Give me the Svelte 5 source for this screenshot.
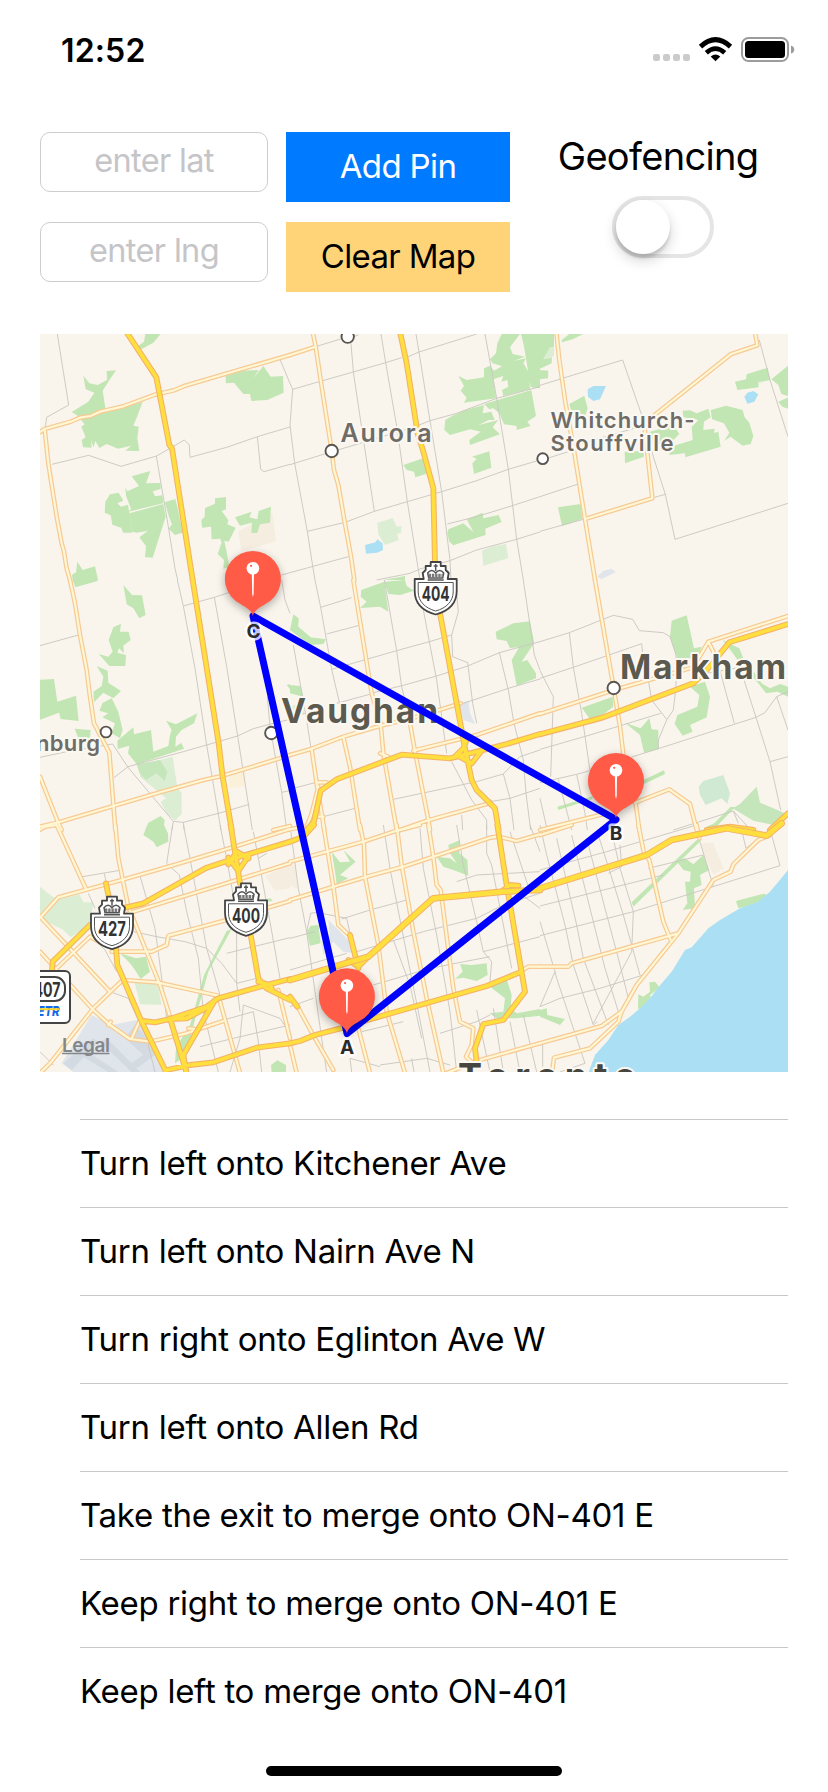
<script>
  // Each sheet is one part of the map, drawn on a grid three times finer than the page.
  const sheets = [
    {
      x: 40, y: 330,
      park: 'M228 121L200 123L201 150L173 165L148 160L130 137L137 178L163 188L145 215L95 246L120 262L197 240L188 182L205 155ZM116 262L197 244L308 216L292 258L280 287L296 290L292 325L298 363L256 362L273 347L234 356L200 342L178 354L166 333L160 352L153 330L155 353L129 352L125 330L137 322L124 290L134 283ZM316 12L362 12L340 38L300 60L294 48L312 35ZM556 135L600 122L656 120L640 145L670 108L692 140L729 138L731 188L682 210L634 213L630 192L610 192L582 158L558 160ZM275 439L331 423L318 460L362 459L362 477L338 484L345 499L367 496L370 520L266 545L273 537L258 497L256 472L262 484L297 468ZM236 488L250 512L232 520L243 530L264 524L277 608L250 608L243 593L217 584L212 556L194 548L196 515L210 493ZM268 550L370 522L377 560L338 683L315 681L318 648L298 622L324 602L290 608L277 605ZM374 517L406 507L413 535L428 608L405 615L386 596L396 583L388 563ZM558 501L525 505L525 521L495 534L494 560L484 570L486 593L513 590L515 628L540 626L545 637L533 672L552 690L550 717L568 710L560 665L553 632L566 635L587 593L562 583L565 570L545 543L558 538ZM585 562L635 545L628 562L652 568L656 543L693 530L690 578L660 583L652 609L634 609L636 578L600 587ZM112 695L128 720L165 709L174 750L98 750L96 734L108 727Z',
      built: 'M595 604L697 550L708 634L604 664Z',
      street: 'M52 12L86 225L20 262L15 300M36 403L146 376L243 409L350 378L433 330L448 345L450 382L560 352L652 320L750 291M349 378L385 590L405 715L413 750M652 320L662 418L672 425L750 403M720 88L750 160M725 735L750 728',
      road: 'M-10 312L14 297L92 275L120 263L152 258L180 245L250 229L345 194L402 181L435 167L750 75M14 297L25 400L50 560L65 640L72 665L80 715L90 750',
      highway: 'M250 -8L349 142L388 345L396 355L458 750'
    },
    {
      x: 290, y: 330,
      park: 'M340 405L395 386L415 383L408 432L376 442L372 425L350 420ZM635 12L690 12L660 52L668 72L705 80L660 97L640 110L608 100L600 88L618 70L622 40ZM693 12L750 12L750 175L722 172L708 85L700 40ZM505 137L530 150L582 142L582 115L600 107L612 122L660 95L708 85L700 100L718 130L720 178L640 198L636 180L655 170L652 150L634 155L640 138L610 148L618 205L522 218L530 203L512 182L522 168ZM527 240L582 225L578 250L604 245L614 270L596 270L566 285L625 270L608 292L630 313L540 345L538 330L572 305L540 298L480 315L463 300L466 270L487 257ZM582 222L630 208L724 180L738 258L712 275L722 288L680 300L680 288L642 283L628 250L610 235L598 238ZM546 380L598 364L604 413L552 432L547 400L560 386ZM475 598L520 580L550 606L530 568L578 548L580 565L626 555L635 576L586 596L587 615L490 646L478 635L472 610ZM280 750L345 738L345 750Z',
      meadow: 'M262 578L290 570L308 564L320 590L334 588L334 608L322 612L326 630L285 645L265 612ZM576 662L604 650L648 642L655 684L580 708Z',
      water: 'M225 645L256 637L262 628L278 640L279 660L262 668L228 671Z',
      street: 'M0 160L8 178L77 158L190 126L287 98L335 83M77 50L152 27M190 20L205 15M350 82L387 66L560 12M8 178L0 285L14 400L52 604L68 708L75 750M0 404L110 370L370 292L420 272L500 250L620 205L750 170M183 40L190 126L222 340L253 544M273 12L287 98L322 300L352 515L390 750M378 12L387 66L420 272L455 485L480 690L483 750M585 12L620 205L655 418L680 628L700 750M52 604L165 577L253 544L352 515L455 485L560 452L655 418L750 390M472 582L560 560L667 527L750 500M0 728L175 680M260 750L360 730L390 717L480 692L560 660L680 628L750 606',
      road: 'M66 -4L77 50L92 150L125 362L132 420L145 465L163 570L183 680L193 750M0 75L77 50',
      highway: 'M328 -4L350 100L383 310L400 365L430 475L436 750'
    },
    {
      x: 540, y: 330,
      park: 'M0 12L42 12L42 50L30 52L10 88L36 82L35 100L0 116ZM0 120L25 122L24 145L0 148ZM65 30L88 12L130 12L98 28L66 37ZM88 222L133 197L143 235L135 260L100 265ZM585 155L618 148L620 133L683 113L690 150L655 155L656 172L592 180ZM694 148L750 102L750 200L724 192L715 165ZM715 215L750 200L750 238L727 230ZM428 242L450 241L470 250L505 236L512 262L492 275L490 300L524 296L522 308L535 305L542 350L436 382L435 370L388 375L392 350L458 330L455 290L475 270L430 262ZM512 240L558 227L608 240L614 262L628 278L640 318L632 342L608 347L572 320L553 332L568 308L552 280L516 268ZM330 305L400 285L418 312L400 330L350 345L335 330ZM254 366L310 362L312 380L255 400ZM54 532L122 522L127 567L66 588Z',
      meadow: 'M30 52L42 30L42 78L10 88ZM655 155L683 130L690 150L656 160ZM535 265L565 265L572 275L550 280Z',
      water: 'M143 178L160 168L198 168L180 208L160 213L144 200ZM613 200L622 188L640 183L655 193L643 215L622 221Z',
      field: 'M172 740L190 722L215 716L227 726L185 748Z',
      street: 'M0 166L100 135L248 90L305 255L340 380L376 493L405 628L744 520M0 392L85 365M110 345L300 290M0 500L115 462M0 604L130 568M340 503L376 493M658 30L690 150L744 320',
      road: 'M48 -4L58 90L75 210L105 380L135 567L165 750M135 567L337 505L313 285L340 258L572 73L652 46L643 -4'
    },
    {
      x: 40, y: 580,
      park: 'M98 0L175 0L170 4L106 22ZM250 15L276 45L306 46L317 105L298 115L280 85L260 73ZM243 131L240 155L266 155L272 180L250 197L252 220L237 205L232 218L258 225L256 258L208 258L176 222L205 230L218 215L206 180L220 142ZM170 258L203 272L205 308L243 333L220 355L190 338L162 367L160 335L185 318L190 290ZM188 368L215 355L235 395L248 450L240 475L215 460L225 430L187 412L205 400L178 392ZM0 299L42 297L52 365L108 347L116 423L62 417L57 398L0 419ZM104 446L152 450L150 473L116 478ZM232 482L280 442L282 463L333 450L340 515L385 498L390 465L395 450L378 422L408 433L472 400L462 430L425 450L408 470L406 500L424 488L432 506L290 553L264 520L268 497L233 507ZM316 750L325 728L362 708L374 720L370 750ZM740 315L750 312L750 328Z',
      meadow: 'M298 555L398 530L412 622L425 640L425 702L405 722L380 700L362 665L378 655L300 590Z',
      grove: 'M290 553L360 540L382 575L374 603L350 580L318 600L298 578Z',
      sand: 'M565 590L618 575L614 618L570 625Z',
      street: 'M0 197L115 165M412 0L430 78L465 265L500 495L543 750M430 78L523 52L566 38M523 52L560 260L593 468L625 672L637 750M725 0L735 60L750 100M0 532L80 515L218 492L264 562L400 724L430 727L543 698L628 673M222 593L264 560L430 515L500 495L593 468L640 446L700 430L750 418M682 350L690 440L725 637L750 632M725 637L740 750M400 724L396 750M430 727L433 750',
      road: 'M90 0L105 70L120 165L140 270L150 350L162 430L208 518L226 750M0 740L52 728L220 678L350 640L490 600L545 588L720 535L750 525M0 590L52 722L65 750M700 750L750 738',
      highway: 'M458 0L490 200L536 490L548 590L575 750'
    },
    {
      x: 290, y: 580,
      park: 'M214 30L283 5L295 95L270 80L210 84L230 65L212 50ZM283 5L345 0L350 18L372 32L330 45L295 42ZM10 103L26 115L25 140L62 172L108 178L100 192L60 195L0 150ZM617 155L670 130L720 124L733 190L715 215L695 245L712 240L738 280L738 295L680 317L665 240L688 200L660 205L650 183L620 178ZM0 315L32 318L40 350L0 340Z',
      meadow: 'M0 380L40 365L42 400L0 405Z',
      field: 'M505 368L535 363L540 400L555 432L520 420Z',
      street: 'M75 0L92 82L125 268L150 375M92 82L185 53M110 162L208 136M125 268L320 212L418 185L485 165L505 95L500 40M283 0L320 212L335 320L350 380M400 90L418 185L440 300L470 520M485 165L488 230L533 248L548 370L560 430M250 338L340 316L440 288L533 258L628 218L750 185M700 0L733 225L750 270M628 218L655 330L672 430L700 540L708 640L722 750M520 370L655 325L750 297M10 195L50 420L63 505M140 370L250 340M0 413L45 400M10 625L75 608M100 710L195 685M310 658L560 605L640 582L690 530L750 510M485 545L545 660L590 720L590 750M640 582L660 655L672 750M600 665L660 655L750 625M515 705L518 750',
      road: 'M190 0L245 340L272 432L280 520L320 750M0 525L60 508L160 470L270 438L390 408L512 370M65 508L80 610L98 720L103 750M160 472L180 560L210 750M360 430L375 515L415 720L420 750M370 512L560 465L750 400M270 520L295 530M330 750L410 722L590 672L600 665M85 620L65 700L50 740M78 607L110 607M85 710L100 710M0 748L40 740',
      highway: 'M450 100L500 370L522 490L545 600L560 630L615 685L626 750M50 750L72 725L92 632L140 598L335 524L480 535L560 515L650 492L750 462M495 530L520 505L528 485M505 528L545 550L575 512'
    },
    {
      x: 540, y: 580,
      park: 'M395 122L440 106L462 205L485 200L475 235L412 235L390 170ZM450 320L495 305L510 350L500 412L450 435L458 455L428 467L404 432L412 405L472 380L478 345ZM125 383L218 350L220 380L180 410L148 415ZM255 428L302 445L328 415L335 448L355 450L355 508L312 518L300 465ZM548 180L598 205L612 240L645 280L665 310L690 325L720 312L744 320L744 350L712 335L678 340L655 310L600 250L575 215ZM52 680L160 648L155 658L55 690ZM310 600L372 571L375 582L312 612ZM502 750L572 680L585 682L520 750Z',
      grove: 'M578 685L600 672L650 620L660 668L735 700L735 715L700 735L640 722Z',
      marsh: 'M476 620L490 603L550 585L570 640L562 672L545 655L497 675L480 645Z',
      street: 'M0 185L88 158L220 106L278 118L298 152L370 158L390 170L408 225L408 320L400 390L380 420L355 480L355 505M88 158L100 262L125 400L150 572M0 295L100 262L305 191L310 240M0 272L40 350L32 590M0 508L150 465L362 400M325 300L335 360L380 418M0 608L110 583L150 572M272 532L358 505L648 412L675 398L710 350L744 335M540 272L583 430M600 262L648 412L690 545L722 690M500 280L600 262M690 545L744 530M710 350L744 450M55 598L82 700L95 750M110 583L135 700L142 750M0 655L22 750M400 750L580 693L632 750M580 693L595 730',
      road: 'M165 0L222 330L240 440L252 540M0 402L222 330L460 262L505 185L744 108M505 185L520 215M0 750L200 700M285 668L388 628L450 672L470 750M287 670L298 750',
      highway: 'M0 463L190 412L460 310L500 270L568 187L744 132M500 750L570 740L640 750M690 750L744 700'
    },
    {
      x: 40, y: 825,
      field: 'M155 570L215 600L290 585L300 600L375 741L100 741L65 715Z',
      park: 'M322 0L372 0L384 25L385 50L350 67L340 50L310 30ZM240 385L288 400L318 395L330 440L302 462L285 435L270 415ZM575 312L505 440L462 595L460 605L440 690L405 715L408 670L425 640L450 600L492 450L560 318ZM693 720L712 706L738 720L738 744L695 744ZM660 225L692 220L698 228L664 232Z',
      meadow: 'M0 185L38 215L62 222L118 208L130 232L160 232L150 300L92 337L70 315L0 280ZM283 470L352 470L365 540L300 538Z',
      built: 'M675 152L750 120L750 190L705 198Z',
      runway: 'M105 680L120 665L235 741L205 741ZM180 650L200 640L300 741L275 741ZM70 715L160 640L175 650L95 735ZM255 640L285 600L305 620L345 690L290 730L270 718L310 690Z',
      street: 'M398 0L380 115L418 150L440 260L475 400L490 560L535 741M430 0L450 100L500 370L540 510M128 155L240 136M193 145L205 205M145 205L165 250M300 152L345 310L360 420L380 580M280 320L350 335L435 350L500 370L545 415L590 475M540 0L560 100L590 270L590 475L600 560M640 20L655 100L690 290L720 460M655 100L680 85M560 385L750 338M590 475L650 460M480 665L580 640L750 600M550 585L640 560L655 650L665 741M610 540L720 580L740 610M610 540L600 640L570 741M210 500L265 520L320 640L345 741M155 335L195 375L230 440M0 680L40 720',
      road: 'M0 14L15 5L50 0L138 192M226 0L235 100L265 245L360 480L390 575M0 278L55 217L245 165L410 118L600 60L750 12M265 265L590 165L750 115M215 380L335 380L380 360L385 332L560 285L750 228M250 465L350 472L535 512L600 744M0 275L210 500M0 380L160 555L210 600L270 642L330 650L440 625L550 588M0 744L30 715L160 550L245 468M150 335L50 430M150 335L185 355M275 640L300 585M445 610L465 612M715 495L745 620L750 640M205 600L212 590',
      highway: 'M572 0L600 175M632 330L655 460L680 490L750 525M255 248L310 235L500 128L600 95L750 50M198 175L208 225M150 300L38 410L35 450M228 370L232 420L305 590L380 744M310 588L345 592L390 582L500 545L535 520L660 485L750 462M390 580L440 744M390 582L440 580L500 548M440 744L430 690L525 525M380 735L450 720L520 712L650 668L750 655M565 98L595 138L626 92M565 118L590 80L626 100M655 470L690 480L700 500'
    },
    {
      x: 290, y: 825,
      field: 'M115 285L140 310L180 350L195 385L160 380L130 350L100 390L95 350L120 345Z',
      park: 'M125 80L150 112L180 110L160 75L197 110L150 150L175 160L140 178L135 140ZM440 95L480 100L500 115L478 82L475 60L510 45L508 85L532 105L535 152L490 135L460 125ZM50 320L62 302L85 300L92 355L60 362ZM510 417L545 420L590 415L593 450L560 468L520 458L495 462L518 440ZM600 485L650 462L665 510L662 550L680 565L750 552L750 572L680 580L620 580L598 565L640 560L645 520Z',
      built: 'M0 120L15 120L25 195L0 180Z',
      street: 'M0 340L75 320M110 741L95 640L75 500L50 320L62 265L80 262L170 280L190 370L230 570M0 0L25 190L50 320M155 282L240 255L350 225M0 435L170 385M200 380L400 320L560 280L640 240L750 205M280 0L300 130L345 360L385 560L420 741M310 345L360 480L395 640M390 10L400 130L440 330L480 560L500 741M500 0L520 120L560 290L580 380L605 410L600 470M590 0L590 85L605 120L640 300L665 430M500 170L560 150L750 140M580 380L750 335M0 545L70 520M250 480L420 430L600 395M450 625L560 590L600 570M270 720L410 700L480 720M560 555L600 741M610 550L640 741M660 590L690 741M700 570L740 741M720 0L750 80M660 20L720 200M180 700L270 725M180 700L185 741M365 700L372 741M215 620L340 590M690 205L750 250',
      road: 'M100 0L130 185L145 300L182 335M210 0L222 60L225 155L265 360L290 560L345 744M320 0L335 120L370 320L410 520L460 744M415 0L430 95L440 180L452 195L490 490L510 590L550 610L545 660L528 695L545 711M0 110L110 80L220 50L310 20L390 0M0 225L130 185L230 155L340 125L430 95L600 38L625 35L680 48L750 28M20 540L75 640L130 735M0 660L20 744M205 610L240 744M470 744L570 705L750 655M690 440L715 425L750 425',
      highway: 'M0 50L40 35L72 0M180 330L205 430M622 0L650 180L705 500L640 585L580 597L555 670L560 710M0 655L30 648L75 630L160 608L250 580L590 483L695 440M0 515L22 545M175 405L205 425L235 395M640 195L660 180L685 182',
      motorway: 'M0 465L200 405L235 395L430 220L640 200L750 195'
    },
    {
      x: 540, y: 825,
      water: 'M750 128L715 170L690 200L655 230L600 250L540 285L505 310L455 367L435 375L395 440L365 475L330 520L300 550L270 575L235 600L205 645L165 690L145 744L750 744Z',
      park: 'M588 228L670 206L680 208L655 235L595 250ZM275 232L470 45L485 45L280 245ZM500 5L530 -8L535 0L512 15ZM410 108L435 100L460 118L490 90L508 135L480 150L485 180L462 190L465 250L428 255L442 235L435 170L450 170L452 140L430 135ZM295 508L310 515L330 500L328 472L345 470L360 488L330 510L340 540L294 552ZM0 555L20 550L22 570L75 582L60 600L0 575Z',
      built: 'M485 55L520 52L530 80L552 130L520 150L490 85Z',
      street: 'M0 0L20 90L75 300L100 420L160 600L172 590M50 40L110 300L130 400L205 600M95 30L160 290L195 430L235 560M140 40L195 250L235 400L265 520M175 30L250 270L300 450M215 20L240 130L280 260L275 380L160 595M0 135L200 80L470 0M0 243L210 190L370 150M0 332L280 260L720 122L695 30M0 545L60 520L180 490L310 450M0 290L45 440L50 460L110 640L135 715M45 440L0 545M205 145L245 125L240 60M325 130L490 90M480 50L520 185M608 28L618 70L650 45M8 655L8 725M60 741L135 715',
      road: 'M0 30L95 0M295 0L312 85L328 105L370 290L392 345M470 0L478 40M0 425L85 425L95 415L415 325M690 30L655 45L580 118L572 140L520 165L415 325L290 480L245 560L185 603L0 655M245 560L235 590L150 670L42 698L36 744',
      motorway: 'M0 190L320 90L395 45L560 10L680 32L725 -5'
    }
  ];

  const ground = ['field', 'runway', 'built', 'sand', 'meadow', 'grove', 'marsh', 'park', 'water', 'street'];
  const towns = [[347.7, 336.7, 6.2], [331.7, 451, 6.2], [542.7, 458.7, 5.4], [106, 732, 5.4], [271.3, 733, 6.2], [613.7, 688, 6.2]];
  const shields = [
    { x: 435.7, y: 561, n: '404' },
    { x: 246, y: 882.3, n: '400' },
    { x: 112, y: 895.7, n: '427' }
  ];
  const pins = [
    { x: 252.9, y: 579, n: 'C', tx: 253.5, ty: 638 },
    { x: 616, y: 781, n: 'B', tx: 616, ty: 840 },
    { x: 346.9, y: 996.3, n: 'A', tx: 347, ty: 1054.3 }
  ];
  const steps = [
    'Turn left onto Kitchener Ave',
    'Turn left onto Nairn Ave N',
    'Turn right onto Eglinton Ave W',
    'Turn left onto Allen Rd',
    'Take the exit to merge onto ON-401 E',
    'Keep right to merge onto ON-401 E',
    'Keep left to merge onto ON-401'
  ];
  let geofencing = $state(false);
</script>

<div class="screen">
  <header class="status">
    <span class="time">12:52</span>
    <svg class="indicators" width="144" height="28" viewBox="652 35 144 28">
      <g fill="#cbcbcb">
        {#each [653, 663, 673, 683] as x}
          <rect {x} y="54" width="7" height="7" rx="2.2" />
        {/each}
      </g>
      <g fill="none" stroke="#000">
        <path d="M700.5 46.6Q715.5 32.8 730.5 46.6" stroke-width="5" />
        <path d="M706.3 52.8Q715.5 44.6 724.7 52.8" stroke-width="4.6" />
      </g>
      <path d="M715.5 61.3L710.7 56.4Q715.5 52.6 720.3 56.4Z" />
      <rect x="742" y="38" width="46" height="23" rx="6.5" fill="none" stroke="#9c9c9c" stroke-width="2" />
      <rect x="745" y="41" width="40" height="17" rx="3.5" />
      <path d="M791 45.5Q794.3 46.5 794.3 49.5Q794.3 52.5 791 53.5Z" fill="#9c9c9c" />
    </svg>
  </header>

  <section class="controls">
    <div class="col fields">
      <input type="text" placeholder="enter lat" />
      <input type="text" placeholder="enter lng" />
    </div>
    <div class="col">
      <button class="add">Add Pin</button>
      <button class="clear">Clear Map</button>
    </div>
    <div class="fence">
      <span class="fence-label">Geofencing</span>
      <button class="switch" class:on={geofencing} aria-label="Geofencing" onclick={() => (geofencing = !geofencing)}>
        <span class="knob"></span>
      </button>
    </div>
  </section>

  <svg class="map" viewBox="40 334 748 738" width="748" height="738">
    {#each ground as layer}
      {#each sheets as s}
        {#if s[layer]}
          <path class={layer} d={s[layer]} transform="translate({s.x} {s.y}) scale(.33333)" />
        {/if}
      {/each}
    {/each}
    {#each ['road', 'highway', 'motorway'] as kind}
      {#each ['casing', 'core'] as part}
        {#each sheets as s}
          {#if s[kind]}
            <path class="{kind} {part}" d={s[kind]} transform="translate({s.x} {s.y}) scale(.33333)" />
          {/if}
        {/each}
      {/each}
    {/each}

    {#each towns as [x, y, r]}
      <circle class="town" cx={x} cy={y} {r} />
    {/each}

    <g class="place">
      <text x="340.5" y="442" font-size="25" textLength="91">Aurora</text>
      <text x="550.5" y="428" font-size="22" textLength="144">Whitchurch-</text>
      <text x="550.5" y="451" font-size="22" textLength="123">Stouffville</text>
      <text x="100" y="751" font-size="22" text-anchor="end" textLength="64">nburg</text>
      <text class="city" x="281" y="723" font-size="33.5" textLength="157">Vaughan</text>
      <text class="city" x="620" y="679" font-size="33.5" textLength="166">Markham</text>
      <text class="capital" x="458" y="1088.5" font-size="36" textLength="178">Toronto</text>
    </g>

    {#each shields as s}
      <g transform="translate({s.x} {s.y})">
        <path d="M-5 1H5V5H10V9L13 12L12 18H21V30C21 42 13 50 0 53.5C-13 50 -21 42 -21 30V18H-12L-13 12L-10 9V5H-5Z" fill="#fff" stroke="#444" stroke-width="1.8" stroke-linejoin="round" />
        <path d="M-17.5 21.5H17.5V31C17.5 40 11 47 0 50C-11 47 -17.5 40 -17.5 31Z" fill="none" stroke="#555" stroke-width="1" />
        <path d="M-2 5H2M0 3V10M-8 12Q-4 7 0 12Q4 7 8 12L7 17H-7ZM-8 19H8" fill="none" stroke="#555" stroke-width="1.5" />
        <path d="M-7 14.5H7" stroke="#777" stroke-width="3.4" stroke-dasharray="2.4 .8" />
        <text class="num" x="0" y="40.3" font-size="20.5" text-anchor="middle" textLength="28" lengthAdjust="spacingAndGlyphs">{s.n}</text>
      </g>
    {/each}

    <rect x="20" y="971" width="50" height="52" rx="5" fill="#fff" stroke="#444" stroke-width="2" />
    <rect x="20" y="977" width="45" height="24" rx="10" fill="#fff" stroke="#444" stroke-width="2" />
    <text class="num" x="60.5" y="996.5" font-size="20.5" text-anchor="end" textLength="27" lengthAdjust="spacingAndGlyphs">407</text>
    <text class="etr" x="59.5" y="1016" text-anchor="end" textLength="22" lengthAdjust="spacingAndGlyphs">ETR</text>
    <path d="M40 1009.2H59" stroke="#f7d02c" stroke-width="2" />

    <text class="legal" x="62" y="1052" textLength="48">Legal</text>
    <path d="M62 1053.5H109.5" stroke="#85868a" stroke-width="1.6" />

    <path class="route" d="M347 1033.5L253 616L616 819.5Z" />

    {#each pins as p}
      <text class="letter" x={p.tx} y={p.ty} text-anchor="middle">{p.n}</text>
      <g transform="translate({p.x} {p.y})">
        <path class="balloon" d="M0 37C-1.5 31 -7 28.5 -12 25.3A28 28 0 1 1 12 25.3C7 28.5 1.5 31 0 37Z" />
        <circle cy="-10.8" r="6.3" fill="#fff" />
        <circle cx="-1.8" cy="-13.2" r="1.1" fill="#ff5b47" />
        <path d="M-1.1 -6H1.1L.7 15L0 18L-.7 15Z" fill="#fff" />
      </g>
    {/each}
  </svg>

  <ul class="steps">
    {#each steps as step}
      <li>{step}</li>
    {/each}
  </ul>

  <div class="home"></div>
</div>

<style>
  :global(body) {
    margin: 0;
    background: #fff;
  }

  .screen {
    box-sizing: border-box;
    width: 828px;
    height: 1792px;
    overflow: hidden;
    display: flex;
    flex-direction: column;
    background: #fff;
    color: #000;
    font-family: Inter, 'Liberation Sans', sans-serif;
  }

  .status {
    display: flex;
    justify-content: space-between;
    align-items: center;
    height: 98px;
    padding: 0 32px 0 61px;
    box-sizing: border-box;
  }

  .time {
    font-size: 32px;
    font-weight: 600;
    letter-spacing: 0.15px;
    line-height: 40px;
    margin-top: 3px;
  }

  .controls {
    display: flex;
    height: 202px;
    padding: 34px 40px 0;
    box-sizing: border-box;
  }

  .col {
    display: flex;
    flex-direction: column;
    gap: 20px;
    width: 224px;
  }

  .fields {
    width: 228px;
    gap: 30px;
    margin-right: 18px;
  }

  input {
    box-sizing: border-box;
    width: 228px;
    height: 60px;
    padding: 0 6px 4px;
    border: 1px solid #cdcdcf;
    border-radius: 10px;
    background: #fff;
    font: 32.5px Inter, 'Liberation Sans', sans-serif;
    letter-spacing: -0.65px;
    text-align: center;
  }

  input::placeholder {
    color: #c5c5c8;
    opacity: 1;
  }

  .col button {
    height: 70px;
    padding: 0 0 2px;
    border: 0;
    font: 33px Inter, 'Liberation Sans', sans-serif;
    letter-spacing: -0.65px;
  }

  .add {
    background: #007aff;
    color: #fff;
  }

  .clear {
    background: #ffd479;
    color: #000;
  }

  .fence {
    display: flex;
    flex-direction: column;
    align-items: center;
    width: 206px;
    margin-left: 45px;
  }

  .fence-label {
    font-size: 38px;
    line-height: 48px;
    letter-spacing: -0.7px;
    margin-bottom: 16px;
  }

  .switch {
    box-sizing: border-box;
    width: 102px;
    height: 62px;
    padding: 0;
    border: 4px solid #e5e5e6;
    border-radius: 31px;
    background: #fff;
    margin-left: 10px;
  }

  .knob {
    display: block;
    width: 54px;
    height: 54px;
    border-radius: 50%;
    background: #fff;
    box-shadow: 0 6px 14px rgba(0, 0, 0, 0.18), 0 4px 3px rgba(0, 0, 0, 0.12);
  }

  .on {
    border-color: #34c759;
    background: #34c759;
  }

  .on .knob {
    margin-left: 40px;
  }

  .map {
    display: block;
    flex: none;
    margin: 34px 40px 0;
    background: #f9f5ed;
    overflow: hidden;
    font-family: Inter, 'Liberation Sans', sans-serif;
  }

  .park { fill: #c2e6b3; }
  .grove { fill: #c5e5bb; }
  .meadow { fill: #dbeed3; }
  .marsh { fill: #cfe9d3; }
  .built { fill: #f5eee0; }
  .sand { fill: #faf1d8; }
  .field { fill: #dfe5ea; }
  .runway { fill: #d3dae2; }
  .water { fill: #abe0f4; }

  .street {
    fill: none;
    stroke: #c9c7c1;
    stroke-width: 2.8;
  }

  .road,
  .highway,
  .motorway {
    fill: none;
    stroke-linecap: round;
    stroke-linejoin: round;
  }

  .road.casing { stroke: #f7ca94; stroke-width: 14; }
  .road.core { stroke: #fff7d4; stroke-width: 6.5; }
  .highway.casing { stroke: #f4b268; stroke-width: 17.5; }
  .highway.core { stroke: #ffdf3d; stroke-width: 11; }
  .motorway.casing { stroke: #f4b268; stroke-width: 20; }
  .motorway.core { stroke: #ffdf3d; stroke-width: 14; }

  .town {
    fill: #fff;
    stroke: #58554f;
    stroke-width: 1.9;
  }

  .place text {
    fill: #6f6c67;
    font-weight: 600;
    stroke: #fbf8f2;
    stroke-width: 4;
    stroke-linejoin: round;
    paint-order: stroke;
  }

  .place .city {
    fill: #5c594f;
    font-weight: 700;
  }

  .place .capital {
    fill: #47453f;
    font-weight: 700;
  }

  .num {
    fill: #333;
    font-weight: 700;
  }

  .etr {
    fill: #1467e8;
    font-size: 13.5px;
    font-weight: 800;
    font-style: italic;
  }

  .legal {
    fill: #85868a;
    font-size: 19px;
    font-weight: 600;
  }

  .route {
    fill: none;
    stroke: #00f;
    stroke-width: 7;
    stroke-linejoin: round;
  }

  .letter {
    fill: #2b2b2b;
    font-size: 19px;
    font-weight: 700;
    stroke: rgba(255, 255, 255, 0.8);
    stroke-width: 5;
    stroke-linejoin: round;
    paint-order: stroke;
  }

  .balloon {
    fill: #ff5b47;
    filter: drop-shadow(0 3px 4px rgba(0, 0, 0, 0.3));
  }

  .steps {
    list-style: none;
    margin: 47px 40px 0 80px;
    padding: 0;
  }

  .steps li {
    box-sizing: border-box;
    height: 88px;
    border-top: 1px solid #c8c7cc;
    font-size: 33px;
    line-height: 87px;
    letter-spacing: -0.28px;
    white-space: nowrap;
  }

  .home {
    width: 296px;
    height: 10px;
    margin: 31px auto 0;
    border-radius: 5px;
    background: #000;
  }
</style>
